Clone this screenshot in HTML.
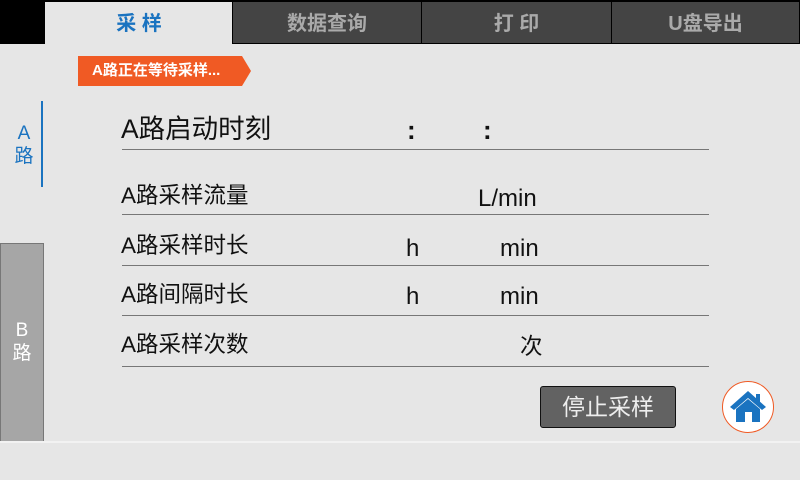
<!DOCTYPE html>
<html><head><meta charset="utf-8"><style>
*{margin:0;padding:0;box-sizing:border-box}
body{width:800px;height:480px;background:#e6e6e6;position:relative;overflow:hidden;font-family:"Liberation Sans","Noto Sans CJK SC",sans-serif}
.a{position:absolute}
.tab{position:absolute;top:0;height:44px;background:#444;color:#aaa;font-weight:bold;font-size:20px;text-align:center;line-height:44px;border:1px solid #000;border-top:2px solid #000}
.t{position:absolute;color:#111;font-size:22.5px;line-height:1;white-space:nowrap}
.u{font-size:24px}
.ln{position:absolute;left:122px;width:587px;height:1px;background:#777}
</style></head><body>
<div class="a" style="left:0;top:0;width:46px;height:44px;background:#000"></div>
<div class="a" style="left:45px;top:0;width:188px;height:44px;background:#e6e6e6;border-top:2px solid #000;color:#1a73c0;font-weight:bold;font-size:20px;text-align:center;line-height:44px">采 样</div>
<div class="tab" style="left:232px;width:190px">数据查询</div>
<div class="tab" style="left:421px;width:191px">打 印</div>
<div class="tab" style="left:611px;width:189px">U盘导出</div>
<div class="a" style="left:78px;top:56px;width:164px;height:30px;background:#f05a24;color:#fff;font-weight:bold;font-size:15px;line-height:30px;padding-left:14px;white-space:nowrap">A路正在等待采样...</div>
<div class="a" style="left:242px;top:56px;width:0;height:0;border-top:15px solid transparent;border-bottom:15px solid transparent;border-left:9px solid #f05a24"></div>
<div class="a" style="left:14px;top:122px;color:#1a73c0;font-size:19px;line-height:23px;text-align:center;width:20px">A<br>路</div>
<div class="a" style="left:41px;top:101px;width:2px;height:86px;background:#1a73c0"></div>
<div class="a" style="left:0;top:243px;width:44px;height:199px;background:#a6a6a6;border:1px solid #777;color:#fff;font-size:19px;line-height:23px;text-align:center;padding-top:75px">B<br>路</div>
<div class="t" style="left:121px;top:116px;font-size:26.5px">A路启动时刻</div>
<div class="t" style="left:407px;top:117px;font-size:26px;font-weight:bold">:</div>
<div class="t" style="left:483px;top:117px;font-size:26px;font-weight:bold">:</div>
<div class="ln" style="top:149px"></div>
<div class="t" style="left:121px;top:185px">A路采样流量</div>
<div class="t u" style="left:478px;top:187px">L/min</div>
<div class="ln" style="top:214px"></div>
<div class="t" style="left:121px;top:235px">A路采样时长</div>
<div class="t u" style="left:406px;top:237px">h</div>
<div class="t u" style="left:500px;top:237px">min</div>
<div class="ln" style="top:265px"></div>
<div class="t" style="left:121px;top:284px">A路间隔时长</div>
<div class="t u" style="left:406px;top:285px">h</div>
<div class="t u" style="left:500px;top:285px">min</div>
<div class="ln" style="top:315px"></div>
<div class="t" style="left:121px;top:334px">A路采样次数</div>
<div class="t" style="left:520px;top:336px">次</div>
<div class="ln" style="top:366px"></div>
<div class="a" style="left:540px;top:386px;width:136px;height:42px;background:#626262;border:1px solid #111;border-radius:3px;color:#eee;font-size:23px;text-align:center;line-height:40px">停止采样</div>
<div class="a" style="left:722px;top:381px;width:52px;height:52px;border-radius:50%;background:#fff;border:1.5px solid #f05a24"></div>
<svg class="a" style="left:722px;top:381px" width="52" height="52" viewBox="0 0 52 52">
<path d="M8 26 L26 10 L44 26 L40 29 L26 17 L12 29 Z" fill="#1a73c0"/>
<rect x="34" y="13" width="4" height="8" fill="#1a73c0"/>
<path d="M14 28 L26 18 L38 28 V41 H14 Z" fill="#1a73c0"/>
<rect x="23" y="31" width="7" height="10" fill="#fff"/>
</svg>
<div class="a" style="left:0;top:441px;width:800px;height:2px;background:#f2f2f2"></div>
</body></html>
